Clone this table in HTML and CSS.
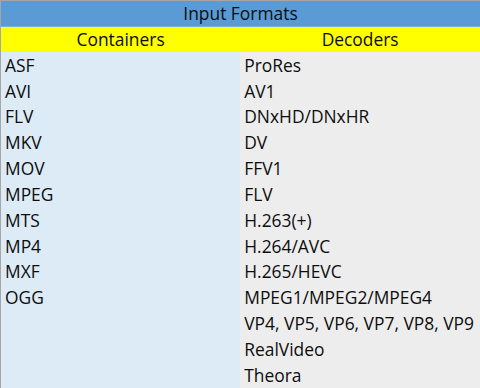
FILE: index.html
```html
<!DOCTYPE html>
<html lang="en">

<head>
    <meta charset="UTF-8">
    <meta name="viewport" content="width=device-width, initial-scale=1.0">
    <title>Input Formats</title>
    <link rel="stylesheet" href="styles.css">
</head>

<body>
    <table class="formats">
        <thead>
            <tr>
                <th colspan="2" class="title">Input Formats</th>
            </tr>
            <tr>
                <th class="group">Containers</th>
                <th class="group">Decoders</th>
            </tr>
        </thead>
        <tbody>
            <tr><td class="cont">ASF</td><td class="dec">ProRes</td></tr>
            <tr><td class="cont">AVI</td><td class="dec">AV1</td></tr>
            <tr><td class="cont">FLV</td><td class="dec">DNxHD/DNxHR</td></tr>
            <tr><td class="cont">MKV</td><td class="dec">DV</td></tr>
            <tr><td class="cont">MOV</td><td class="dec">FFV1</td></tr>
            <tr><td class="cont">MPEG</td><td class="dec">FLV</td></tr>
            <tr><td class="cont">MTS</td><td class="dec">H.263(+)</td></tr>
            <tr><td class="cont">MP4</td><td class="dec">H.264/AVC</td></tr>
            <tr><td class="cont">MXF</td><td class="dec">H.265/HEVC</td></tr>
            <tr><td class="cont">OGG</td><td class="dec">MPEG1/MPEG2/MPEG4</td></tr>
            <tr><td class="cont"></td><td class="dec">VP4, VP5, VP6, VP7, VP8, VP9</td></tr>
            <tr><td class="cont"></td><td class="dec">RealVideo</td></tr>
            <tr><td class="cont"></td><td class="dec">Theora</td></tr>
        </tbody>
    </table>
</body>

</html>
```

FILE: styles.css
```css
body {
    margin: 0;
    padding: 0;
    background-color: #ffffff;
    font-family: "Open Sans", "Noto Sans", sans-serif;
    color: #0d0d0d;
}

.formats {
    width: 480px;
    height: 388px;
    font-size: 17.4px;
    border-collapse: collapse;
    border-top: 1px solid #a6a6a6;
    border-left: 1px solid #a6a6a6;
    table-layout: fixed;
}

.formats th {
    font-weight: normal;
    text-align: center;
    height: 25px;
    padding: 0;
    line-height: 1;
}

.title {
    background-color: #5b9bd5;
    border-bottom: 1px solid #7fb0dd;
}

.group {
    background-color: #ffff00;
}

.formats td {
    height: 24.7px;
    padding: 1px 4px 0;
    line-height: 1;
    text-align: left;
    white-space: nowrap;
}

.cont {
    width: 228px;
    background-color: #ddebf7;
}

.dec {
    background-color: #ededed;
}
```
